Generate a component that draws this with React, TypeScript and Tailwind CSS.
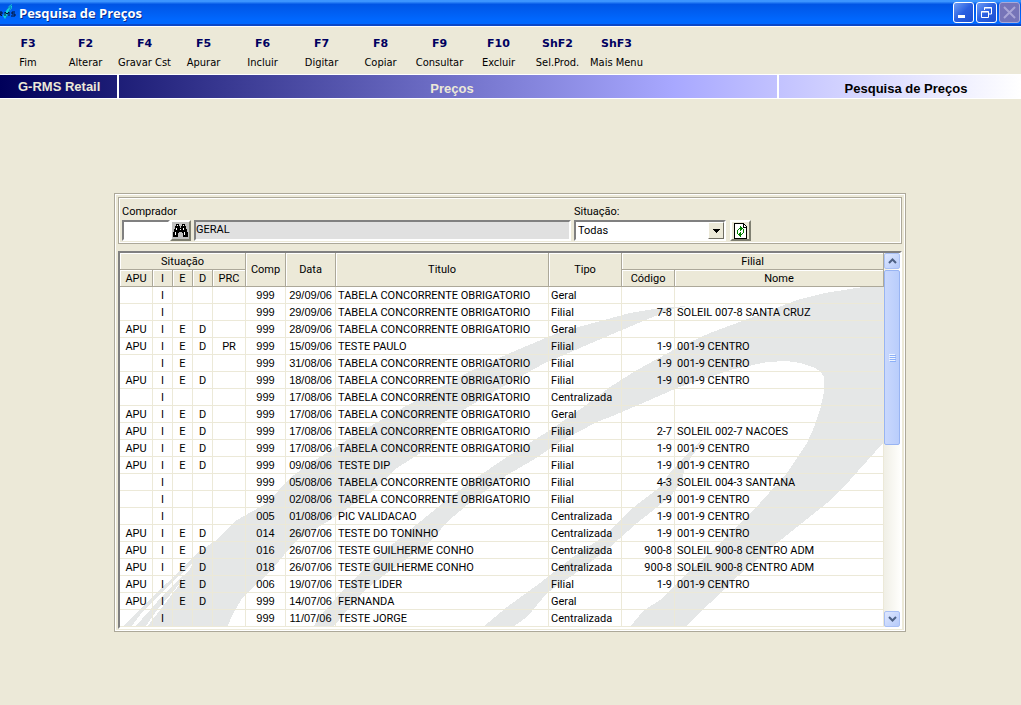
import type { ReactNode } from 'react';
import clsx from 'clsx';

const SHORTCUTS = [
  { key: 'F3', label: 'Fim' },
  { key: 'F2', label: 'Alterar' },
  { key: 'F4', label: 'Gravar Cst' },
  { key: 'F5', label: 'Apurar' },
  { key: 'F6', label: 'Incluir' },
  { key: 'F7', label: 'Digitar' },
  { key: 'F8', label: 'Copiar' },
  { key: 'F9', label: 'Consultar' },
  { key: 'F10', label: 'Excluir' },
  { key: 'ShF2', label: 'Sel.Prod.' },
  { key: 'ShF3', label: 'Mais Menu' },
];

const CONC = 'TABELA CONCORRENTE OBRIGATORIO';

// apu, i, e, d, prc, comp, data, titulo, tipo, codigo, nome
const ROWS = [
  ['', 'I', '', '', '', '999', '29/09/06', CONC, 'Geral', '', ''],
  ['', 'I', '', '', '', '999', '29/09/06', CONC, 'Filial', '7-8', 'SOLEIL 007-8 SANTA CRUZ'],
  ['APU', 'I', 'E', 'D', '', '999', '28/09/06', CONC, 'Geral', '', ''],
  ['APU', 'I', 'E', 'D', 'PR', '999', '15/09/06', 'TESTE PAULO', 'Filial', '1-9', '001-9 CENTRO'],
  ['', 'I', 'E', '', '', '999', '31/08/06', CONC, 'Filial', '1-9', '001-9 CENTRO'],
  ['APU', 'I', 'E', 'D', '', '999', '18/08/06', CONC, 'Filial', '1-9', '001-9 CENTRO'],
  ['', 'I', '', '', '', '999', '17/08/06', CONC, 'Centralizada', '', ''],
  ['APU', 'I', 'E', 'D', '', '999', '17/08/06', CONC, 'Geral', '', ''],
  ['APU', 'I', 'E', 'D', '', '999', '17/08/06', CONC, 'Filial', '2-7', 'SOLEIL 002-7 NACOES'],
  ['APU', 'I', 'E', 'D', '', '999', '17/08/06', CONC, 'Filial', '1-9', '001-9 CENTRO'],
  ['APU', 'I', 'E', 'D', '', '999', '09/08/06', 'TESTE DIP', 'Filial', '1-9', '001-9 CENTRO'],
  ['', 'I', '', '', '', '999', '05/08/06', CONC, 'Filial', '4-3', 'SOLEIL 004-3 SANTANA'],
  ['', 'I', '', '', '', '999', '02/08/06', CONC, 'Filial', '1-9', '001-9 CENTRO'],
  ['', 'I', '', '', '', '005', '01/08/06', 'PIC VALIDACAO', 'Centralizada', '1-9', '001-9 CENTRO'],
  ['APU', 'I', 'E', 'D', '', '014', '26/07/06', 'TESTE DO TONINHO', 'Centralizada', '1-9', '001-9 CENTRO'],
  ['APU', 'I', 'E', 'D', '', '016', '26/07/06', 'TESTE GUILHERME CONHO', 'Centralizada', '900-8', 'SOLEIL 900-8 CENTRO ADM'],
  ['APU', 'I', 'E', 'D', '', '018', '26/07/06', 'TESTE GUILHERME CONHO', 'Centralizada', '900-8', 'SOLEIL 900-8 CENTRO ADM'],
  ['APU', 'I', 'E', 'D', '', '006', '19/07/06', 'TESTE LIDER', 'Filial', '1-9', '001-9 CENTRO'],
  ['APU', 'I', 'E', 'D', '', '999', '14/07/06', 'FERNANDA', 'Geral', '', ''],
  ['', 'I', '', '', '', '999', '11/07/06', 'TESTE JORGE', 'Centralizada', '', ''],
];

const COLS = ['w-[33px]', 'w-5', 'w-5', 'w-5', 'w-[33px]', 'w-10', 'w-[50px]', 'w-[213px]', 'w-[73px]', 'w-[53px]', 'w-auto'];

const SUNKEN = 'border-2 border-t-[#808080] border-l-[#808080] border-r-white border-b-white';
const RAISED = 'border-2 border-t-white border-l-white border-r-[#808072] border-b-[#808072]';

const cellClass = (col: number) =>
  clsx(
    'h-[17px] p-0 border-r border-b border-[#ece9d8] overflow-hidden whitespace-nowrap',
    col <= 6 && 'text-center',
    (col === 5 || col === 6) && 'font-[Liberation_Sans,sans-serif]',
    col === 9 && 'text-right pr-[2px]',
    (col === 7 || col === 8 || col === 10) && 'text-left pl-[2px]'
  );

const CaptionButton = ({ label, disabled, children }: { label: string; disabled?: boolean; children: ReactNode }) => (
  <button
    type="button"
    aria-label={label}
    disabled={disabled}
    className={clsx(
      'size-[21px] rounded-[3px] border flex items-center justify-center',
      disabled ? 'border-[#a9a9d8] bg-[#7674b8]' : 'border-white bg-linear-to-br from-[#6f9cf5] via-[#2a5fe0] to-[#1c4fd0]'
    )}
  >
    {children}
  </button>
);

const ScrollButton = ({ label, d }: { label: string; d: string }) => (
  <button
    type="button"
    aria-label={label}
    className="h-4 w-full shrink-0 rounded-[2px] border border-[#a9c0f5] bg-linear-to-br from-[#dfe8ff] to-[#b5caf9] flex items-center justify-center"
  >
    <svg width="9" height="6" viewBox="0 0 9 6" fill="none" stroke="#4d6185" strokeWidth="2">
      <path d={d} />
    </svg>
  </button>
);

const Head = ({ children, colSpan, rowSpan }: { children: ReactNode; colSpan?: number; rowSpan?: number }) => (
  <th
    colSpan={colSpan}
    rowSpan={rowSpan}
    className="h-[17px] p-0 font-normal border-r border-b border-[#aca899] bg-[#ece9d8] shadow-[inset_1px_1px_0_#ffffff]"
  >
    {children}
  </th>
);

const TitleBar = () => (
  <header className="h-[26px] flex items-center pr-[1px] bg-linear-to-b/srgb from-[#3c95ff] from-6% via-[#0055e5] via-18% to-[#0068ff] to-84% border-b-2 border-[#0a48c8]">
    <svg width="17" height="16" viewBox="0 0 17 16" className="mr-[2px]">
      <path d="M5 15 L3 12 L6 7 L9 2 L12 0 L12 4 L9 8 L8 11 Z" fill="#12d3dc" />
      <path d="M6 14 L11 3 M7 5 L12 1" stroke="#0873c4" />
      <path d="M0 12V8h2v2H0l2 2M5 12V8l2 2 2-2v4M15 8h-3v2h3v2h-4" fill="none" stroke="#04102e" />
    </svg>
    <h1 className="flex-1 pt-[2px] font-['Open_Sans','Noto_Sans',sans-serif] font-bold text-[13px] leading-[18px] text-white [text-shadow:1px_1px_0_#0a2a8a]">
      Pesquisa de Preços
    </h1>
    <div className="flex gap-[2px]">
      <CaptionButton label="Minimizar">
        <svg width="13" height="13" viewBox="0 0 13 13"><path d="M1 9h7v3H1z" fill="#fff" /></svg>
      </CaptionButton>
      <CaptionButton label="Restaurar">
        <svg width="13" height="13" viewBox="0 0 13 13" fill="none" stroke="#fff">
          <path d="M4.500 4V1.500h7V8H9M4 2h8M1.500 5.500h7v6h-7zM1 6h8" />
        </svg>
      </CaptionButton>
      <CaptionButton label="Fechar" disabled>
        <svg width="13" height="13" viewBox="0 0 13 13"><path d="M1 1l11 11M12 1L1 12" stroke="#a9a6d6" strokeWidth="2" /></svg>
      </CaptionButton>
    </div>
  </header>
);

const Toolbar = () => (
  <nav className="h-[48px] flex border-t border-white pt-[9px]">
    {SHORTCUTS.map((s, i) => (
      <button
        key={s.key}
        type="button"
        className={clsx(
          'flex flex-col items-center gap-[4px] whitespace-nowrap text-[11px] leading-[15px] self-start',
          i === 0 ? 'w-14' : 'w-[59px]'
        )}
      >
        <span className="font-['DejaVu_Sans',sans-serif] font-bold text-[#000060]">{s.key}</span>
        <span className="font-['DejaVu_Sans_Condensed','DejaVu_Sans',sans-serif]">{s.label}</span>
      </button>
    ))}
  </nav>
);

const Banner = () => (
  <div className="h-[25px] flex border-y border-white font-['Liberation_Sans',sans-serif] font-bold text-[13px] leading-[23px] bg-linear-to-r/srgb from-[#00005a] via-[#a8a8ff] via-66% to-white">
    <div className="w-[119px] pl-[18px] border-r-2 border-white text-[#ece9d8]">G-RMS Retail</div>
    <div className="flex-1 border-r-2 border-white text-center text-[#ece9d8] pl-2 pt-[2px]">Preços</div>
    <div className="w-[242px] pl-3 text-center text-black pt-[2px]">Pesquisa de Preços</div>
  </div>
);

const Filters = () => (
  <form className="border border-[#aca899] outline outline-white -outline-offset-2 h-[47px] pl-[3px] pt-[7px] flex leading-[14px]">
    <div className="flex-1">
      <label htmlFor="comprador" className="block h-[15px]">Comprador</label>
      <div className="flex h-[21px]">
        <input id="comprador" type="text" className={clsx(SUNKEN, 'w-12 bg-white px-[2px]')} />
        <button type="button" aria-label="Procurar comprador" className={clsx(RAISED, 'w-[21px] bg-[#c0c0c0] flex items-center justify-center')}>
          <svg width="15" height="13" viewBox="0 0 15 13" shapeRendering="crispEdges">
            <path d="M3 0h3v2h1v2h1V2h1V0h3v2h1v3h1v3h1v5h-5V9H9V8H6v1H5v4H0V8h1V5h1V2h1z" fill="#000" />
            <path d="M4 1h1v1H4zM10 1h1v1h-1zM3 4h1v2H3zM2 8h1v3H2zM10 4h1v2h-1zM11 8h1v3h-1zM7 5h1v1H7z" fill="#fff" />
          </svg>
        </button>
        <input
          type="text"
          aria-label="Nome do comprador"
          readOnly
          defaultValue="GERAL"
          className={clsx(SUNKEN, 'ml-[3px] flex-1 bg-[#e0e0e0] pb-[2px]')}
        />
      </div>
    </div>
    <div className="ml-[3px] w-[327px]">
      <label htmlFor="situacao" className="block h-[15px]">Situação:</label>
      <div className="flex h-[21px]">
        <div className="relative w-[152px]">
          <select id="situacao" className={clsx(SUNKEN, 'appearance-none size-full bg-white pl-[2px] pt-[1px]')}>
            <option>Todas</option>
          </select>
          <span className="pointer-events-none absolute right-[2px] inset-y-[2px] w-4 bg-[#ece9d8] border border-t-white border-l-white border-r-[#716f64] border-b-[#716f64] flex items-center justify-center">
            <svg width="7" height="4" viewBox="0 0 7 4" shapeRendering="crispEdges"><path d="M0 0h7L3.500 4z" /></svg>
          </span>
        </div>
        <button type="button" aria-label="Atualizar" className={clsx(RAISED, 'ml-1 w-[21px] flex items-center justify-center')}>
          <svg width="13" height="16" viewBox="0 0 13 16" fill="none" shapeRendering="crispEdges">
            <path d="M.5.5h9l3 3v12H.5z" fill="#fff" stroke="#000" />
            <path d="M9.500 1v3H12" stroke="#000" />
            <path d="M3 7h1v4H3zM4 6h1v1H4zM5 5h2v1H5zM9 6h1v4H9zM8 10h1v1H8zM6 11h2v1H6z" fill="#008000" />
            <path d="M6 3h1v1h1v1h1v1H8v1H7v1H6zM7 9v5H6v-1H5v-1H4v-1h1v-1h1V9z" fill="#008000" />
          </svg>
        </button>
      </div>
    </div>
  </form>
);

// brush-stroke logo printed behind the rows
const Watermark = () => (
  <svg
    className="absolute left-0 bottom-0 w-full h-[340px]"
    viewBox="120 287 764 340"
    preserveAspectRatio="none"
    fill="#e5e7e7"
    shapeRendering="crispEdges"
  >
    <path d="M147 627L160 610L177 588L190 569L197 553L215 541L237 520L267 503L290 478L310 463L337 447L350 438L397 411L430 393L463 375L490 362L517 350L560 332L597 322L630 313L660 308L687 306L673 309L653 317L610 335L580 348L543 364L520 377L497 390L463 410L437 427L430 447L397 468L370 493L330 520L297 540L284 555L270 572L243 597L234 612L227 627Z" />
    <path d="M122 627L140 609L155 594L167 583L178 572L196 554L204 550L194 561L180 575L157 597L143 611L131 627Z" />
    <path d="M135 627L150 610L165 593L180 578L188 572L176 588L158 609L145 627Z" />
    <path d="M262 508L275 496L287 486L298 473L320 458L306 474L290 490Z" />
    <path d="M313 627L323 613L343 590L377 557L410 530L443 503L473 480L507 457L547 432L575 413L597 397L610 387L637 370L677 348L710 333L753 317L797 300L825 293L863 287H884V442L850 480L827 503L777 543L733 580L710 603L685 627H630L643 611L660 600L680 580L710 553L735 528L760 503L787 473L807 443L815 425L820 410L824 392V377L820 371L813 367L800 363L787 361L767 362L730 370L677 388L643 403L610 417L597 422L563 440L533 460L507 475L473 500L447 522L430 542L387 573L365 590L350 607L333 627Z" />
    <path d="M483 627L507 607L540 583L573 557L603 537L630 510L660 487L670 473L685 456L703 438L695 452L685 466L682 481L670 497L637 523L610 547L580 570L547 593L527 617L513 627Z" />
  </svg>
);

const Grid = () => (
  <div className={clsx(SUNKEN, 'mt-[7px] flex bg-white')}>
    <div className="relative flex-1">
      <Watermark />
      <table className="relative w-full table-fixed border-separate border-spacing-0 leading-[15px]">
        <colgroup>
          {COLS.map((w, i) => (
            <col key={i} className={w} />
          ))}
        </colgroup>
        <thead>
          <tr>
            <Head colSpan={5}>Situação</Head>
            <Head rowSpan={2}>Comp</Head>
            <Head rowSpan={2}>Data</Head>
            <Head rowSpan={2}>Titulo</Head>
            <Head rowSpan={2}>Tipo</Head>
            <Head colSpan={2}>Filial</Head>
          </tr>
          <tr>
            <Head>APU</Head>
            <Head>I</Head>
            <Head>E</Head>
            <Head>D</Head>
            <Head>PRC</Head>
            <Head>Código</Head>
            <Head>Nome</Head>
          </tr>
        </thead>
        <tbody>
          {ROWS.map((row, i) => (
            <tr key={i}>
              {row.map((text, col) => (
                <td key={col} className={cellClass(col)}>{text}</td>
              ))}
            </tr>
          ))}
        </tbody>
      </table>
    </div>
    <div className="w-4 flex flex-col bg-linear-to-r from-[#f0efe6] to-[#fefefb]">
      <ScrollButton label="Rolar para cima" d="M1 5l3.500-3.500L8 5" />
      <div className="h-[175px] mt-[1px] rounded-[2px] border border-[#98b4f2] bg-linear-to-r from-[#c9d8fd] to-[#b9cdfb] flex items-center justify-center">
        <svg width="7" height="8" viewBox="0 0 7 8" shapeRendering="crispEdges">
          <path d="M0 .5h6M0 2.500h6M0 4.500h6M0 6.500h6" stroke="#eef4fe" />
          <path d="M1 1.500h6M1 3.500h6M1 5.500h6M1 7.500h6" stroke="#8cb0f8" />
        </svg>
      </div>
      <div className="flex-1" />
      <ScrollButton label="Rolar para baixo" d="M1 1l3.500 3.500L8 1" />
    </div>
  </div>
);

export default function App() {
  return (
    <div className="min-h-screen bg-[#ece9d8] text-black font-[Roboto,'Liberation_Sans',sans-serif] text-[11px]">
      <TitleBar />
      <Toolbar />
      <Banner />
      <main className="pt-[94px] pl-[114px] pr-[115px]">
        <div className="border border-[#aca899] outline outline-white -outline-offset-2 px-[3px] pt-[3px] pb-[2px]">
          <Filters />
          <Grid />
        </div>
      </main>
    </div>
  );
}
